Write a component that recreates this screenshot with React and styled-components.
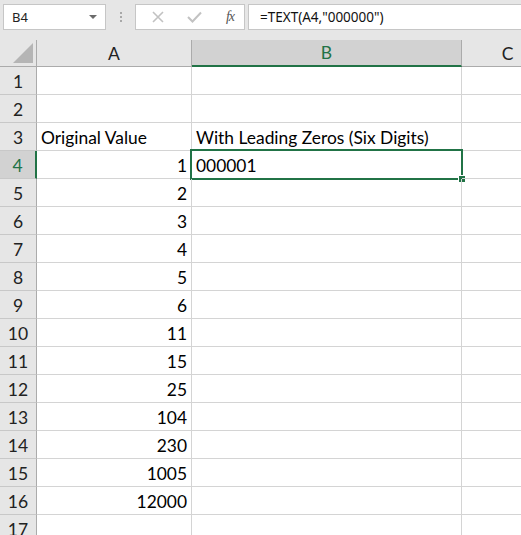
import React from 'react'
import styled, { createGlobalStyle } from 'styled-components'

const GlobalStyle = createGlobalStyle`
  html, body {
    margin: 0;
    padding: 0;
    background: #ffffff;
    overflow: hidden;
  }
`

const Page = styled.div`
  width: 521px;
  height: 535px;
  overflow: hidden;
  font-family: "Segoe UI", "Noto Sans", sans-serif;
`

const FormulaBar = styled.div`
  display: flex;
  align-items: flex-start;
  height: 40px;
  padding: 4px 0 0 3px;
  box-sizing: border-box;
  background: #e6e6e6;
`

const Box = styled.div`
  display: flex;
  align-items: center;
  height: 26px;
  box-sizing: border-box;
  background: #ffffff;
  border: 1px solid #c6c6c6;
`

const NameBox = styled(Box)`
  width: 103px;
  padding: 0 8px 0 8px;
  justify-content: space-between;
  font-size: 13px;
  color: #222;
`

const Caret = styled.span`
  width: 0;
  height: 0;
  border-left: 4px solid transparent;
  border-right: 4px solid transparent;
  border-top: 4px solid #6b6b6b;
`

const Grip = styled.div`
  width: 29px;
  height: 26px;
  display: flex;
  flex-direction: column;
  align-items: center;
  justify-content: center;
  gap: 2px;
  span {
    width: 2px;
    height: 2px;
    background: #a8a8a8;
  }
`

const Buttons = styled(Box)`
  width: 110px;
  padding: 0 10px 0 16px;
  justify-content: space-between;
`

const FxText = styled.span`
  font-family: "Liberation Serif", serif;
  font-style: italic;
  font-size: 14px;
  color: #555;
  letter-spacing: -1px;
`

const FormulaInput = styled(Box)`
  flex: 1;
  margin-left: 3px;
  border-right: none;
  padding-left: 11px;
  font-size: 13.5px;
  color: #111;
`

const Grid = styled.div`
  display: grid;
  grid-template-columns: 37px 155px 270px 92px;
  grid-template-rows: 27px;
  grid-auto-rows: 28px;
  font-family: Lato, "Noto Sans", sans-serif;
`

const ColHead = styled.div`
  display: flex;
  align-items: center;
  justify-content: center;
  box-sizing: border-box;
  font-size: 17.5px;
  background: ${p => (p.$active ? '#d2d2d2' : '#e6e6e6')};
  color: ${p => (p.$active ? '#217346' : '#222')};
  border-right: 1px solid #ababab;
  border-bottom: ${p => (p.$active ? '2px solid #217346' : '1px solid #ababab')};
`

const Corner = styled(ColHead)`
  align-items: flex-end;
  justify-content: flex-end;
  padding: 0 3px 3px 0;
`

const RowHead = styled.div`
  display: flex;
  align-items: center;
  justify-content: center;
  box-sizing: border-box;
  font-size: 17.5px;
  padding-top: 1px;
  background: ${p => (p.$active ? '#d2d2d2' : '#e6e6e6')};
  color: ${p => (p.$active ? '#217346' : '#222')};
  border-right: ${p => (p.$active ? '2px solid #217346' : '1px solid #ababab')};
  border-bottom: 1px solid #c8c8c8;
`

const Cell = styled.div`
  position: relative;
  display: flex;
  align-items: center;
  justify-content: ${p => (p.$right ? 'flex-end' : 'flex-start')};
  box-sizing: border-box;
  padding: 2px 4px 0 4px;
  font-size: 17.4px;
  color: #000;
  white-space: nowrap;
  border-right: 1px solid #d4d4d4;
  border-bottom: 1px solid #d4d4d4;
`

const Selection = styled.div`
  position: absolute;
  left: -2px;
  top: -2px;
  right: -2px;
  bottom: -2px;
  border: 2px solid #217346;
  pointer-events: none;
`

const Handle = styled.div`
  position: absolute;
  right: -5px;
  bottom: -5px;
  width: 6px;
  height: 6px;
  background: #217346;
  border: 1px solid #fff;
`

const values = [null, null, 'Original Value', 1, 2, 3, 4, 5, 6, 11, 15, 25, 104, 230, 1005, 12000, null]

const App = () => {
  return (
    <Page>
      <GlobalStyle />
      <FormulaBar>
        <NameBox>
          <span>B4</span>
          <Caret />
        </NameBox>
        <Grip><span /><span /><span /></Grip>
        <Buttons>
          <svg width="12" height="12" viewBox="0 0 12 12">
            <path d="M1 1 L11 11 M11 1 L1 11" stroke="#c2c2c2" strokeWidth="1.6" fill="none" />
          </svg>
          <svg width="15" height="12" viewBox="0 0 15 12">
            <path d="M1 6 L5.5 10.5 L14 1.5" stroke="#c2c2c2" strokeWidth="2" fill="none" />
          </svg>
          <FxText>fx</FxText>
        </Buttons>
        <FormulaInput>=TEXT(A4,"000000")</FormulaInput>
      </FormulaBar>
      <Grid>
        <Corner>
          <svg width="20" height="20" viewBox="0 0 20 20">
            <path d="M20 0 L20 20 L0 20 Z" fill="#b5b5b5" />
          </svg>
        </Corner>
        <ColHead>A</ColHead>
        <ColHead $active>B</ColHead>
        <ColHead>C</ColHead>
        {values.map((v, i) => {
          const row = i + 1
          const active = row === 4
          return (
            <React.Fragment key={row}>
              <RowHead $active={active}>{row}</RowHead>
              <Cell $right={typeof v === 'number'}>{v}</Cell>
              <Cell>
                {row === 3 && 'With Leading Zeros (Six Digits)'}
                {row === 4 && '000001'}
                {active && (
                  <Selection>
                    <Handle />
                  </Selection>
                )}
              </Cell>
              <Cell />
            </React.Fragment>
          )
        })}
      </Grid>
    </Page>
  )
}

export default App
